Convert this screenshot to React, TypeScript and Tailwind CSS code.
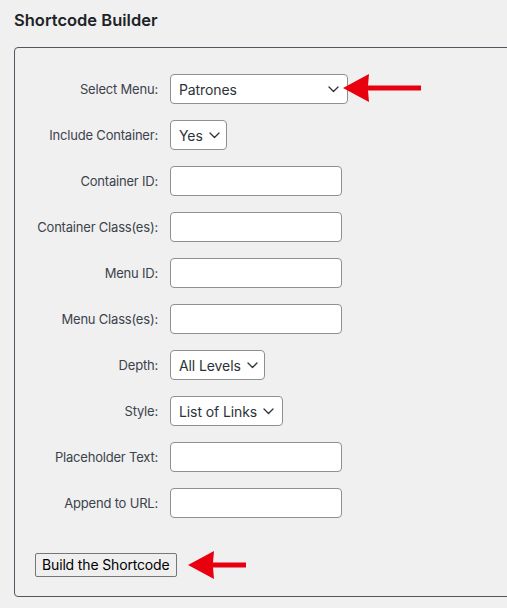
import type { ReactNode } from 'react'

const font = { fontFamily: 'Inter, "Noto Sans", "Liberation Sans", sans-serif' }

function Chevron() {
  return (
    <svg width="11" height="7" viewBox="0 0 11 7" className="shrink-0">
      <path d="M1 1l4.5 4.5L10 1" fill="none" stroke="#2c3338" strokeWidth="1.3" strokeLinecap="round" strokeLinejoin="round" />
    </svg>
  )
}

function Arrow({ className, length }: { className: string; length: number }) {
  return (
    <svg width={length} height="28" viewBox={`0 0 ${length} 28`} className={`pointer-events-none absolute ${className}`}>
      <polygon points={`0,14 26,0 25,11.5 ${length},11.5 ${length},16.5 25,16.5 26,28`} fill="#e8000f" />
    </svg>
  )
}

function Select({ value, width, children }: { value: string; width: string; children?: ReactNode }) {
  return (
    <div className="relative">
      <div
        className={`flex h-[30px] ${width} items-center justify-between gap-[6px] rounded-[4px] border border-[#8c8f94] bg-white pl-[8px] pr-[8px] text-[14px] tracking-[-0.1px] text-[#2c3338]`}
      >
        <span className="whitespace-nowrap">{value}</span>
        <Chevron />
      </div>
      {children}
    </div>
  )
}

function TextInput() {
  return <div className="h-[30px] w-[172px] rounded-[4px] border border-[#8c8f94] bg-white" />
}

function Row({ label, children }: { label: string; children: ReactNode }) {
  return (
    <div className="flex items-center gap-[12px]">
      <label className="flex w-[123px] shrink-0 justify-end whitespace-nowrap pt-[2px] text-[13px] tracking-[-0.2px] text-[#3c434a]">
        {label}
      </label>
      {children}
    </div>
  )
}

export default function App() {
  return (
    <div className="h-[608px] w-[507px] overflow-hidden bg-[#f0f0f1]" style={font}>
      <h2 className="px-[14px] pt-[10px] text-[16.5px] font-semibold leading-[20px] text-[#1d2327]">
        Shortcode Builder
      </h2>

      {/* Builder panel */}
      <div className="ml-[14px] mt-[17px] w-[520px] rounded-[4px] border border-[#50575e] pb-[19px] pl-[20px] pt-[26px]">
        <div className="flex flex-col gap-[16px]">
          <Row label="Select Menu:">
            <Select value="Patrones" width="w-[178px]">
              <Arrow className="left-[173px] top-[0px]" length={78} />
            </Select>
          </Row>
          <Row label="Include Container:">
            <Select value="Yes" width="w-[57px]" />
          </Row>
          <Row label="Container ID:">
            <TextInput />
          </Row>
          <Row label="Container Class(es):">
            <TextInput />
          </Row>
          <Row label="Menu ID:">
            <TextInput />
          </Row>
          <Row label="Menu Class(es):">
            <TextInput />
          </Row>
          <Row label="Depth:">
            <Select value="All Levels" width="w-[95px]" />
          </Row>
          <Row label="Style:">
            <Select value="List of Links" width="w-[113px]" />
          </Row>
          <Row label="Placeholder Text:">
            <TextInput />
          </Row>
          <Row label="Append to URL:">
            <TextInput />
          </Row>
        </div>

        <div className="relative mt-[34px] w-fit">
          <button className="h-[24px] rounded-[2px] border border-[#767676] bg-[#efefef] px-[6px] text-[14px] leading-[20px] tracking-[-0.15px] text-black">
            Build the Shortcode
          </button>
          <Arrow className="left-[153px] top-[-1px]" length={58} />
        </div>
      </div>
    </div>
  )
}
